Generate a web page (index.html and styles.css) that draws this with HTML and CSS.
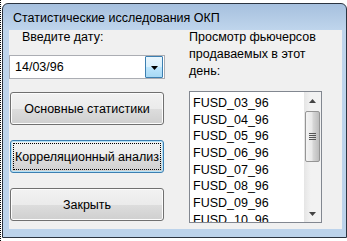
FILE: index.html
```html
<!DOCTYPE html>
<html lang="ru">
  <head>
    <meta charset="UTF-8" />
    <title>Статистические исследования ОКП</title>
    <link rel="stylesheet" href="styles.css">
  </head>
  <body>
    <div class="desktop">
      <div class="window">
        <div class="titlebar">Статистические исследования ОКП</div>

        <div class="client">
          <div class="col-left">
            <div class="label date-label">Введите дату:</div>

            <div class="combo">
              <span class="combo-text">14/03/96</span>
              <div class="drop-btn">
                <svg width="7" height="4" viewBox="0 0 7 4"><path d="M0 0h7L3.5 4z" fill="#000"/></svg>
              </div>
            </div>

            <div class="buttons">
              <button class="btn">Основные статистики</button>
              <button class="btn focused"><span class="focus-rect">Корреляционный анализ</span></button>
              <button class="btn">Закрыть</button>
            </div>
          </div>

          <div class="col-right">
            <div class="label list-label">Просмотр фьючерсов<br>продаваемых в этот<br>день:</div>

            <div class="listbox">
              <ul class="items">
                <li>FUSD_03_96</li>
                <li>FUSD_04_96</li>
                <li>FUSD_05_96</li>
                <li>FUSD_06_96</li>
                <li>FUSD_07_96</li>
                <li>FUSD_08_96</li>
                <li>FUSD_09_96</li>
                <li>FUSD_10_96</li>
              </ul>
              <div class="scrollbar">
                <div class="arrow">
                  <svg width="7" height="4" viewBox="0 0 7 4"><path d="M3.5 0L7 4H0z" fill="#444"/></svg>
                </div>
                <div class="track">
                  <div class="thumb">
                    <span class="grip"></span>
                  </div>
                </div>
                <div class="arrow">
                  <svg width="7" height="4" viewBox="0 0 7 4"><path d="M0 0h7L3.5 4z" fill="#444"/></svg>
                </div>
              </div>
            </div>
          </div>
        </div>
      </div>
    </div>
  </body>
</html>
```

FILE: styles.css
```css
* {
  box-sizing: border-box;
  margin: 0;
  padding: 0;
}

body {
  background: #fff;
  font-family: 'Liberation Sans', Arial, sans-serif;
  font-size: 12.5px;
  color: #000;
  overflow: hidden;
}

.desktop {
  height: 241px;
  width: 347px;
  border-left: 1px dotted #000;
  padding: 3px 0 0 1px;
}

.window {
  width: 345px;
  height: 235px;
  border: 1px solid #2b3440;
  border-radius: 6px 6px 0 0;
  background: linear-gradient(to bottom, #a6c0de 0, #bfd5ec 26px, #bcd3eb 100%);
  padding: 0 4px 8px 6px;
  display: flex;
  flex-direction: column;
}

.titlebar {
  height: 26px;
  padding: 6px 0 0 4px;
  line-height: 16px;
  font-size: 12.5px;
  color: #000;
  white-space: nowrap;
}

.client {
  flex: 1;
  background: #f0f0f0;
  display: grid;
  grid-template-columns: 156px 133px;
  column-gap: 24px;
  align-items: start;
}

.label {
  line-height: 15px;
}

.date-label {
  padding-left: 13px;
  margin-bottom: 10px;
}

.combo {
  height: 24px;
  border: 1px solid #abadb3;
  background: #fff;
  display: flex;
  align-items: center;
  justify-content: space-between;
  padding: 1px 1px 1px 5px;
}

.combo-text {
  line-height: 16px;
}

.drop-btn {
  width: 18px;
  height: 22px;
  border: 1px solid #3c7fb1;
  border-radius: 1px;
  background: linear-gradient(to bottom, #eaf6fd 0%, #d9f0fc 50%, #bee6fd 51%, #a7d9f5 100%);
  display: flex;
  align-items: center;
  justify-content: center;
  padding-top: 1px;
}

.buttons {
  display: flex;
  flex-direction: column;
  gap: 15px;
  margin: 13px 0 0 1px;
}

.btn {
  width: 154px;
  height: 33px;
  border: 1px solid #707070;
  border-radius: 3px;
  background: linear-gradient(to bottom, #f2f2f2 0%, #ebebeb 50%, #dddddd 51%, #cfcfcf 100%);
  font-family: 'Liberation Sans', Arial, sans-serif;
  font-size: 12.5px;
  color: #000;
  box-shadow: inset 0 0 0 1px #fcfcfc;
  display: flex;
  align-items: center;
  justify-content: center;
}

.btn.focused {
  border-color: #3c7fb1;
  box-shadow: inset 0 0 0 1px #b4e2f8;
  padding: 2px;
}

.focus-rect {
  display: flex;
  align-items: center;
  justify-content: center;
  width: 100%;
  height: 100%;
  border: 1px dotted #000;
  white-space: nowrap;
}

.list-label {
  line-height: 17px;
  margin: -1px 0 11px;
}

.listbox {
  height: 132px;
  border: 1px solid #828790;
  background: #fff;
  display: flex;
  overflow: hidden;
}

.items {
  list-style: none;
  flex: 1;
  padding: 3px 0 0 3px;
}

.items li {
  height: 16.67px;
  line-height: 16.67px;
  white-space: nowrap;
}

.scrollbar {
  width: 17px;
  background: linear-gradient(to right, #e5e5e5, #f2f2f2 40%, #f2f2f2);
  display: flex;
  flex-direction: column;
}

.arrow {
  height: 17px;
  display: flex;
  align-items: center;
  justify-content: center;
}

.track {
  flex: 1;
  padding-top: 2px;
}

.thumb {
  height: 51px;
  margin: 0 1px;
  border: 1px solid #959595;
  border-radius: 2px;
  background: linear-gradient(to right, #f3f3f3, #e8e8e8 45%, #d6d6d6 55%, #bcbcbc);
  display: flex;
  align-items: center;
  justify-content: center;
}

.grip {
  width: 7px;
  height: 7px;
  background: repeating-linear-gradient(to bottom, #555 0, #555 1px, transparent 1px, transparent 2px);
}
```
